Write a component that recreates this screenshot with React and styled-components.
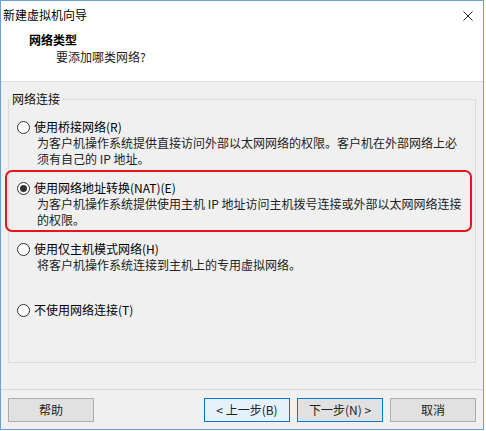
import React from 'react'
import styled, { createGlobalStyle } from 'styled-components'

const GlobalStyle = createGlobalStyle`
  html, body {
    margin: 0;
    padding: 0;
    background: #ffffff;
  }
  * {
    box-sizing: border-box;
  }
`;

const Window = styled.div`
  width: 484px;
  height: 430px;
  border: 1px solid #6a9fd8;
  display: flex;
  flex-direction: column;
  font-family: "Noto Sans CJK SC", "Noto Sans", sans-serif;
  font-size: 12px;
  color: #000;
  background: #f0f0f0;
`;

const TitleBar = styled.div`
  height: 28px;
  display: flex;
  align-items: center;
  justify-content: space-between;
  padding: 0 10px 1px 2px;
  background: #fff;
  line-height: 16px;
`;

const CloseButton = styled.svg`
  width: 10px;
  height: 10px;
  margin-top: 2px;
`;

const Header = styled.div`
  height: 53px;
  background: #fff;
  border-bottom: 1px solid #dfdfdf;
  padding: 3px 0 0 28px;
`;

const HeaderTitle = styled.div`
  font-weight: bold;
  line-height: 16px;
`;

const HeaderSub = styled.div`
  line-height: 16px;
  margin: 1px 0 0 27px;
  color: #222;
`;

const Body = styled.div`
  flex: 1;
  padding: 9px 7px 0 7px;
`;

const Group = styled.fieldset`
  margin: 0;
  border: 1px solid #dcdcdc;
  padding: 12px 0 12px 8px;
  display: flex;
  flex-direction: column;
  gap: 13px;
`;

const Legend = styled.legend`
  margin-left: -7px;
  padding: 0 2px;
  line-height: 16px;
  color: #111;
`;

const Option = styled.div`
  position: relative;
  min-height: 48px;
`;

const Highlight = styled.div`
  position: absolute;
  top: -10px;
  bottom: -4px;
  left: -12px;
  right: 3px;
  border: 2px solid #e8141c;
  border-radius: 7px;
  pointer-events: none;
`;

const OptionLabel = styled.div`
  display: flex;
  align-items: center;
  gap: 4px;
  line-height: 16px;
`;

const Radio = styled.span`
  width: 13px;
  height: 13px;
  border-radius: 50%;
  border: 1px solid #333;
  background: #fff;
  display: flex;
  align-items: center;
  justify-content: center;

  &::after {
    content: '';
    width: 7px;
    height: 7px;
    border-radius: 50%;
    background: ${({ $checked }) => ($checked ? '#333' : 'transparent')};
  }
`;

const Desc = styled.div`
  margin-left: 20px;
  max-width: 428px;
  line-height: 16px;
  color: #222;
`;

const Footer = styled.div`
  height: 40px;
  border-top: 1px solid #dadada;
  display: flex;
  align-items: flex-start;
  padding: 8px 7px 0 7px;
  gap: 7px;
`;

const Button = styled.button`
  width: 86px;
  height: 24px;
  font-family: inherit;
  font-size: 12px;
  line-height: 16px;
  padding: 0;
  color: #222;
  background: ${({ $hover }) => ($hover ? '#e5f1fb' : '#e1e1e1')};
  border: 1px solid ${({ $focus }) => ($focus ? '#0078d7' : '#adadad')};
  margin-left: ${({ $push }) => ($push ? 'auto' : '0')};
`;

const options = [
  {
    label: '使用桥接网络(R)',
    desc: '为客户机操作系统提供直接访问外部以太网网络的权限。客户机在外部网络上必须有自己的 IP 地址。',
  },
  {
    label: '使用网络地址转换(NAT)(E)',
    desc: '为客户机操作系统提供使用主机 IP 地址访问主机拨号连接或外部以太网网络连接的权限。',
    checked: true,
  },
  {
    label: '使用仅主机模式网络(H)',
    desc: '将客户机操作系统连接到主机上的专用虚拟网络。',
  },
  {
    label: '不使用网络连接(T)',
  },
];

export default function App() {
  return (
    <>
      <GlobalStyle />
      <Window>
        <TitleBar>
          <span>新建虚拟机向导</span>
          <CloseButton viewBox="0 0 10 10">
            <path d="M0.5 0.5 L9.5 9.5 M9.5 0.5 L0.5 9.5" stroke="#222" strokeWidth="1" fill="none" />
          </CloseButton>
        </TitleBar>
        <Header>
          <HeaderTitle>网络类型</HeaderTitle>
          <HeaderSub>要添加哪类网络?</HeaderSub>
        </Header>
        <Body>
          <Group>
            <Legend>网络连接</Legend>
            {options.map((o) => (
              <Option key={o.label}>
                {o.checked && <Highlight />}
                <OptionLabel>
                  <Radio $checked={o.checked} />
                  <span>{o.label}</span>
                </OptionLabel>
                {o.desc && <Desc>{o.desc}</Desc>}
              </Option>
            ))}
          </Group>
        </Body>
        <Footer>
          <Button>帮助</Button>
          <Button $push $hover $focus>&lt; 上一步(B)</Button>
          <Button $focus>下一步(N) &gt;</Button>
          <Button>取消</Button>
        </Footer>
      </Window>
    </>
  )
}
